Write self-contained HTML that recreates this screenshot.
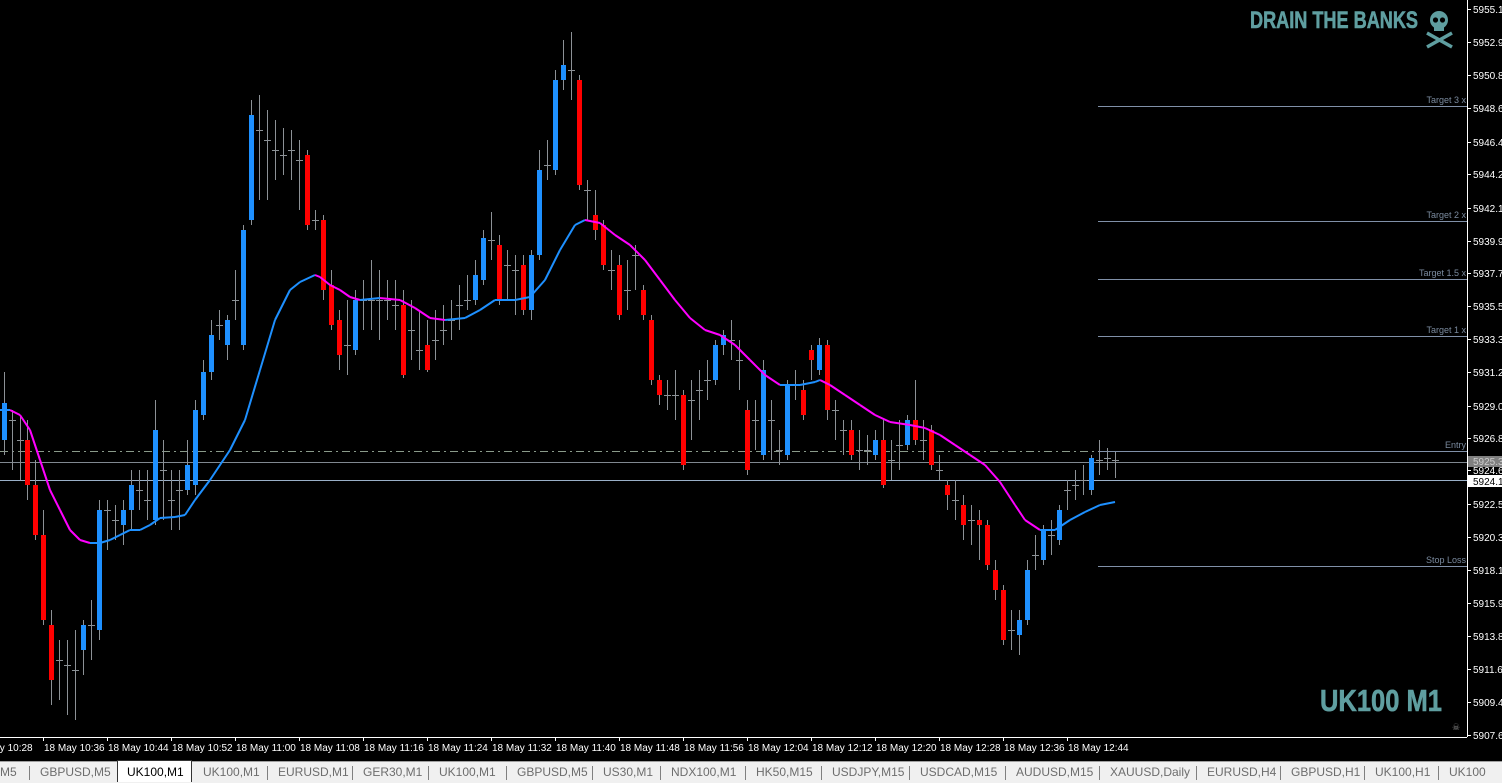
<!DOCTYPE html>
<html><head><meta charset="utf-8"><style>
html,body{margin:0;padding:0;background:#000;width:1502px;height:782px;overflow:hidden;font-family:"Liberation Sans",sans-serif}
#tabs{position:absolute;left:0;top:761px;width:1502px;height:21px;background:#f0f0f0;border-top:1px solid #a0a0a0;font-size:12px;color:#6d6d6d}
.t{position:absolute;top:3px;white-space:nowrap}
.sep{position:absolute;top:4px;width:1px;height:14px;background:#808080}
</style></head><body>
<svg id="c" width="1502" height="762" style="position:absolute;left:0;top:0" font-family="Liberation Sans, sans-serif"></svg>
<div id="tabs"></div>
<script>
var s=document.getElementById('c'),h='';
function L(x1,y1,x2,y2,c,w,d){h+='<line x1="'+x1+'" y1="'+y1+'" x2="'+x2+'" y2="'+y2+'" stroke="'+c+'" stroke-width="'+(w||1)+'"'+(d?' stroke-dasharray="'+d+'"':'')+'/>';}
function T(x,y,t,c,sz,a,extra){h+='<text x="'+x+'" y="'+y+'" fill="'+c+'" font-size="'+sz+'"'+(a?' text-anchor="'+a+'"':'')+(extra||'')+'>'+t+'</text>';}
L(0,451.5,1467,451.5,'#8a9a8a',1,'8,4,2,4');
L(0,462.5,1467,462.5,'#808890',1);
L(0,480.5,1467,480.5,'#9ab0c8',1);
[[106,'Target 3 x'],[221,'Target 2 x'],[279,'Target 1.5 x'],[336,'Target 1 x'],[451,'Entry'],[566,'Stop Loss']].forEach(function(a){L(1098,a[0]+.5,1467,a[0]+.5,'#8090a8',1);T(1466,a[0]-3,a[1],'#7a8a9e',9,'end');});
var C=[[4,440,403,372,455],[12,420,421,410,470],[20,440,441,415,480],[27,440,485,420,500],[35,485,535,460,540],[43,535,620,510,625],[51,625,680,610,705],[59,660,661,640,700],[67,665,666,640,715],[75,670,671,630,720],[83,650,625,620,675],[91,625,626,600,660],[99,630,510,500,640],[107,510,511,500,550],[115,520,521,505,540],[123,525,510,500,545],[131,510,485,470,530],[139,490,491,470,510],[147,500,501,470,520],[155,520,430,400,525],[163,470,471,440,520],[171,500,501,470,530],[179,490,491,470,530],[187,490,465,440,495],[195,485,410,400,495],[203,415,372,360,420],[211,372,335,320,380],[219,325,326,310,340],[227,345,320,315,360],[235,300,301,270,320],[243,345,230,225,350],[251,220,115,100,225],[259,130,131,95,200],[267,140,141,110,200],[275,150,151,120,180],[283,155,156,128,175],[291,150,151,130,180],[299,160,161,140,210],[307,155,225,150,230],[315,220,221,210,230],[323,220,290,215,300],[331,285,325,270,330],[339,320,355,310,370],[347,345,346,300,375],[355,350,300,290,355],[363,300,301,280,330],[371,300,301,260,330],[379,300,301,270,340],[387,300,301,280,320],[395,305,306,280,330],[403,305,375,290,378],[411,330,331,300,360],[419,350,351,310,370],[427,345,370,320,372],[435,340,341,310,360],[443,330,331,305,345],[451,320,321,300,340],[459,305,306,285,330],[467,300,301,275,310],[475,300,275,260,305],[483,280,238,230,285],[491,240,241,212,260],[499,245,300,235,305],[507,265,266,250,300],[515,270,271,255,315],[523,265,310,255,315],[531,310,255,250,320],[539,255,170,150,260],[547,165,166,140,180],[555,170,80,70,175],[563,80,65,40,90],[571,70,71,32,100],[579,80,185,75,190],[587,190,191,180,220],[595,215,230,190,240],[603,225,265,220,270],[611,270,271,250,290],[619,265,315,255,320],[627,290,291,260,310],[635,255,256,245,290],[643,290,315,285,320],[651,320,380,315,385],[659,380,395,375,405],[667,395,396,380,410],[675,395,396,370,420],[683,395,465,390,470],[691,400,401,380,440],[699,390,391,370,420],[707,380,381,360,400],[715,380,345,340,385],[723,345,335,330,355],[731,340,341,320,360],[739,360,361,340,390],[747,410,470,400,475],[755,420,421,400,450],[763,455,370,360,460],[771,420,421,400,460],[779,450,451,430,465],[787,455,385,380,460],[795,385,386,370,400],[803,390,415,380,420],[811,350,360,345,380],[819,370,345,338,375],[827,345,410,340,420],[835,410,411,400,440],[843,430,431,420,455],[851,430,455,420,460],[859,450,451,430,470],[867,450,451,435,465],[875,455,440,430,460],[883,440,485,420,488],[891,460,461,440,480],[899,445,446,420,470],[907,445,420,415,450],[915,420,440,380,445],[923,440,441,420,460],[931,430,465,425,470],[939,470,471,455,480],[947,485,495,480,510],[955,500,501,480,520],[963,505,525,495,540],[971,520,521,505,545],[979,520,525,510,560],[987,525,565,520,570],[995,570,590,560,600],[1003,590,640,585,645],[1011,630,631,610,650],[1019,635,620,610,655],[1027,620,570,560,625],[1035,555,556,535,570],[1043,560,530,525,565],[1051,535,536,520,555],[1059,540,510,505,545],[1067,490,491,480,510],[1075,485,486,470,500],[1083,480,481,465,495],[1091,490,458,455,495],[1099,460,461,440,475],[1107,458,459,448,470],[1115,460,461,452,478]];
C.forEach(function(c){var x=c[0],o=c[1],cl=c[2],hi=c[3],lo=c[4];
 L(x+.5,hi,x+.5,lo,'#8c9196',1);
 if(Math.abs(o-cl)<=1){L(x-3,o+.5,x+4,o+.5,'#8c9196',1);}
 else{var col=cl<o?'#1e90ff':'#ff0000';h+='<rect x="'+(x-2)+'" y="'+Math.min(o,cl)+'" width="5" height="'+Math.abs(o-cl)+'" fill="'+col+'"/>';}
});
var M=[[0,410],[10,410],[20,415],[30,430],[40,460],[50,490],[60,510],[70,530],[80,540],[90,543],[100,543],[110,540],[120,535],[130,530],[140,530],[150,525],[160,518],[175,517],[185,515],[195,500],[210,480],[230,450],[245,420],[260,370],[275,320],[290,290],[300,282],[315,275],[320,277],[330,285],[340,290],[350,297],[360,300],[380,298],[400,300],[415,308],[430,318],[445,320],[465,318],[480,310],[495,300],[515,300],[530,297],[545,280],[560,250],[575,225],[585,220],[600,223],[615,235],[630,245],[645,260],[660,280],[675,300],[690,318],[705,330],[720,335],[735,345],[750,360],[765,375],[780,385],[800,385],[815,382],[820,380],[830,385],[845,395],[860,405],[875,415],[890,422],[910,425],[925,428],[940,435],[955,445],[970,455],[985,465],[1000,482],[1015,505],[1025,520],[1040,530],[1055,530],[1070,520],[1085,512],[1100,505],[1115,502]];
for(var i=1;i<M.length;i++){L(M[i-1][0],M[i-1][1],M[i][0],M[i][1],M[i][1]>M[i-1][1]?'#ff00ff':'#1e90ff',2);}
L(1467.5,0,1467.5,737,'#fff',1);
L(0,737.5,1467,737.5,'#fff',1);
[[9,'5955.1'],[42,'5952.9'],[75,'5950.8'],[108,'5948.6'],[142,'5946.4'],[174,'5944.2'],[208,'5942.1'],[241,'5939.9'],[273,'5937.7'],[306,'5935.5'],[339,'5933.3'],[372,'5931.2'],[406,'5929.0'],[438,'5926.8'],[470,'5924.6'],[504,'5922.5'],[537,'5920.3'],[570,'5918.1'],[603,'5915.9'],[636,'5913.8'],[669,'5911.6'],[702,'5909.4'],[735,'5907.6']].forEach(function(a){L(1467,a[0]+.5,1471,a[0]+.5,'#fff');T(1473,a[0]+4,a[1],'#fff',10);});
h+='<rect x="1468" y="456" width="34" height="11" fill="#808080"/>';T(1473,465,'5925.3','#ccc',10);
h+='<rect x="1468" y="475" width="34" height="12" fill="#fff"/>';T(1473,485,'5924.1','#000',10);
var tt=['10:28','10:36','10:44','10:52','11:00','11:08','11:16','11:24','11:32','11:40','11:48','11:56','12:04','12:12','12:20','12:28','12:36','12:44'];
tt.forEach(function(t,i){var tx=43+64*(i-1);if(i>0)L(tx+.5,737,tx+.5,741,'#fff');T(i==0?-28:tx+1,751,'18 May '+t,'#fff',10);});
T(1250,28,'DRAIN THE BANKS','#5f9ea0',24,null,' font-weight="bold" font-family="Liberation Sans, sans-serif" textLength="168" lengthAdjust="spacingAndGlyphs" stroke="#5f9ea0" stroke-width="0.6"');
T(1320,711,'UK100 M1','#5f9ea0',31,null,' font-weight="bold" font-family="Liberation Sans, sans-serif" textLength="122" lengthAdjust="spacingAndGlyphs" stroke="#5f9ea0" stroke-width="0.6"');
h+='<g fill="#5f9ea0"><ellipse cx="1439" cy="20" rx="9" ry="9"/><rect x="1434" y="25" width="10" height="6"/></g><g fill="#000"><circle cx="1435.5" cy="20" r="2.6"/><circle cx="1442.5" cy="20" r="2.6"/></g>';
h+='<g stroke="#5f9ea0" stroke-width="3.5"><line x1="1427" y1="33" x2="1452" y2="47"/><line x1="1452" y1="33" x2="1427" y2="47"/></g>';
T(1452,730,'☠','#888',9);
s.innerHTML=h;
var tabs=[['M5',0],['GBPUSD,M5',40],['UK100,M1',127],['UK100,M1',203],['EURUSD,M1',278],['GER30,M1',363],['UK100,M1',439],['GBPUSD,M5',517],['US30,M1',603],['NDX100,M1',671],['HK50,M15',756],['USDJPY,M15',832],['USDCAD,M15',920],['AUDUSD,M15',1016],['XAUUSD,Daily',1110],['EURUSD,H4',1207],['GBPUSD,H1',1291],['UK100,H1',1375],['UK100',1449]];
var th='<div style="position:absolute;left:117px;top:-2px;width:73px;height:21px;background:#fff;border:1px solid #333;border-bottom:none"></div>';
tabs.forEach(function(t,i){th+='<div class="t" style="left:'+t[1]+'px;'+(i==2?'color:#000':'')+'">'+t[0]+'</div>';if(i>0&&i!=2&&i!=3)th+='<div class="sep" style="left:'+(t[1]-11)+'px"></div>';});
document.getElementById('tabs').innerHTML=th;
</script>
</body></html>
